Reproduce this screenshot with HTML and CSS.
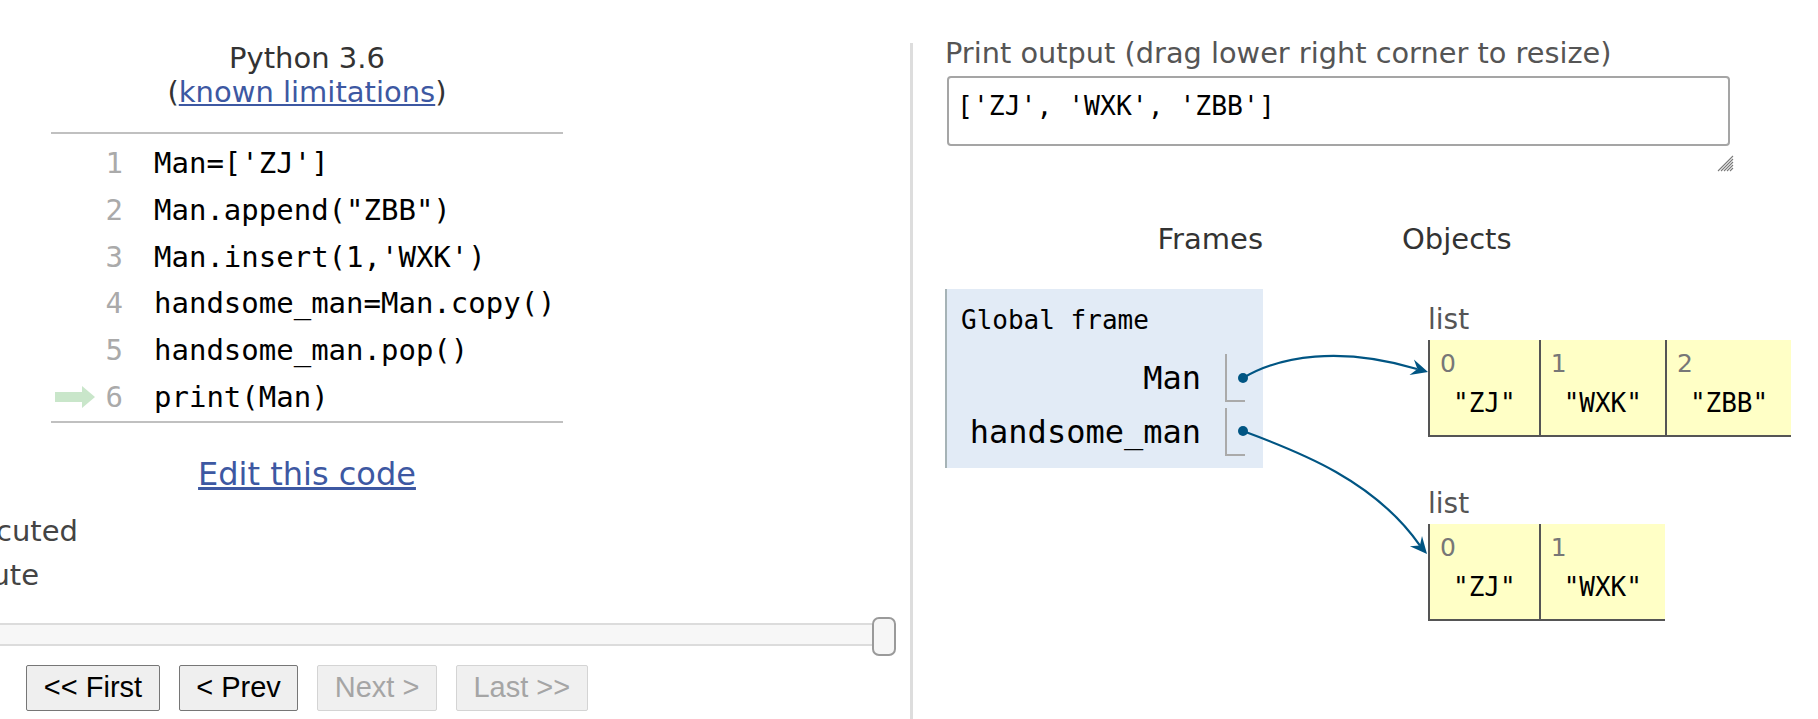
FILE: index.html
```html
<!DOCTYPE html>
<html lang="en">
<head>
<meta charset="utf-8">
<title>Python Tutor</title>
<link rel="stylesheet" href="styles.css">
</head>
<body>
<div class="page">
  <div class="left">
    <div class="center lang">Python 3.6<br>(<a href="#" class="link">known limitations</a>)</div>
    <div class="code">
      <div class="row"><span class="gut"></span><span class="num">1</span><span class="src">Man=['ZJ']</span></div>
      <div class="row"><span class="gut"></span><span class="num">2</span><span class="src">Man.append("ZBB")</span></div>
      <div class="row"><span class="gut"></span><span class="num">3</span><span class="src">Man.insert(1,'WXK')</span></div>
      <div class="row"><span class="gut"></span><span class="num">4</span><span class="src">handsome_man=Man.copy()</span></div>
      <div class="row"><span class="gut"></span><span class="num">5</span><span class="src">handsome_man.pop()</span></div>
      <div class="row"><span class="gut"><svg class="cur" width="42" height="22" viewBox="0 0 42 22"><polygon points="2,6 29,6 29,0 42,11 29,22 29,16 2,16" fill="#c9e6ca"/></svg></span><span class="num">6</span><span class="src">print(Man)</span></div>
    </div>
    <div class="center edit"><a href="#" class="link">Edit this code</a></div>
    <div class="legend">
      <div class="legline l1">line that just executed</div>
      <div class="legline l2">next line to execute</div>
    </div>
    <div class="slider"><div class="track"></div><div class="handle"></div></div>
    <div class="center buttons">
      <button class="btn">&lt;&lt; First</button>
      <button class="btn">&lt; Prev</button>
      <button class="btn" disabled>Next &gt;</button>
      <button class="btn" disabled>Last &gt;&gt;</button>
    </div>
  </div>
  <div class="divider"></div>
  <div class="right">
    <div class="outlabel">Print output (drag lower right corner to resize)</div>
    <div class="stdout">['ZJ', 'WXK', 'ZBB']</div>
    <div class="griprow"><svg width="18" height="18" viewBox="0 0 18 18"><g stroke="#7a7a7a" stroke-width="1.1"><line x1="17" y1="2" x2="2" y2="17"/><line x1="17" y1="5" x2="5" y2="17"/><line x1="17" y1="8" x2="8" y2="17"/><line x1="17" y1="11" x2="11" y2="17"/><line x1="17" y1="14" x2="14" y2="17"/></g></svg></div>
    <div class="diagram">
      <div class="frames">
        <div class="colhead fhead">Frames</div>
        <div class="frame">
          <div class="fname">Global frame</div>
          <div class="var"><span class="vname">Man</span><span class="vval"></span></div>
          <div class="var"><span class="vname">handsome_man</span><span class="vval"></span></div>
        </div>
      </div>
      <div class="objects">
        <div class="colhead">Objects</div>
        <div class="heapobj first">
          <div class="typelabel">list</div>
          <div class="list">
            <div class="cell"><div class="idx">0</div><div class="val">"ZJ"</div></div>
            <div class="cell"><div class="idx">1</div><div class="val">"WXK"</div></div>
            <div class="cell"><div class="idx">2</div><div class="val">"ZBB"</div></div>
          </div>
        </div>
        <div class="heapobj second">
          <div class="typelabel">list</div>
          <div class="list">
            <div class="cell"><div class="idx">0</div><div class="val">"ZJ"</div></div>
            <div class="cell"><div class="idx">1</div><div class="val">"WXK"</div></div>
          </div>
        </div>
      </div>
    </div>
  </div>
</div>
<svg class="arrows" width="1818" height="719" viewBox="0 0 1818 719">
  <g fill="none" stroke="#005583" stroke-width="2.2">
    <path d="M1243,378 C1280,356 1340,346 1417,369"/>
    <path d="M1243,431 C1300,452 1375,481 1420,545.6"/>
  </g>
  <g fill="#005583">
    <circle cx="1243" cy="378" r="5"/>
    <circle cx="1243" cy="431" r="5"/>
    <polygon points="1428,372 1413.9,359.5 1417.4,369 1409.5,374.9"/>
    <polygon points="1427,554 1409.9,546.3 1419.9,545.6 1422,535.9"/>
  </g>
</svg>
</body>
</html>
```

FILE: styles.css
```css
html, body {
  margin: 0;
  padding: 0;
  overflow: hidden;
  background: #fff;
}
body {
  font-family: "DejaVu Sans", Verdana, sans-serif;
  color: #333;
}
.page {
  display: flex;
  align-items: stretch;
  height: 719px;
}
.left {
  width: 910px;
  flex: none;
  padding-top: 41px;
  box-sizing: border-box;
}
.center {
  width: 614px;
  text-align: center;
}
.lang {
  font-size: 29px;
  line-height: 34px;
  color: #333;
}
.link {
  color: #3d58a2;
  text-decoration: underline;
}
.code {
  margin-top: 23px;
  margin-left: 51px;
  width: 512px;
  border-top: 2px solid #c0c0c0;
  border-bottom: 2px solid #c0c0c0;
  padding-top: 6px;
  font-family: "DejaVu Sans Mono", monospace;
  font-size: 29px;
}
.row {
  display: flex;
  align-items: center;
  height: 46.8px;
  line-height: 46.8px;
  white-space: pre;
}
.gut {
  width: 54px;
  height: 46.8px;
  display: flex;
  align-items: center;
  flex: none;
}
.cur {
  display: block;
  margin-left: 2px;
}
.num {
  width: 18px;
  text-align: right;
  color: #aaa;
  flex: none;
}
.src {
  margin-left: 31px;
  color: #000;
}
.edit {
  margin-top: 33px;
  font-size: 32px;
  line-height: 37px;
}
.legend {
  margin-top: 16px;
  font-size: 29px;
  line-height: 44px;
  color: #444;
}
.legline {
  display: flex;
  justify-content: flex-end;
  overflow: hidden;
  white-space: nowrap;
}
.legline.l1 {
  width: 78px;
}
.legline.l2 {
  width: 39px;
}
.slider {
  margin-top: 20px;
  display: flex;
  align-items: flex-start;
  height: 39px;
}
.track {
  width: 872px;
  height: 23px;
  margin-top: 6px;
  box-sizing: border-box;
  border-top: 2px solid #dcdcdc;
  border-bottom: 2px solid #dcdcdc;
  background: #f7f7f7;
}
.handle {
  width: 24px;
  height: 39px;
  box-sizing: border-box;
  border: 2px solid #9a9a9a;
  border-radius: 7px;
  background: #f6f6f6;
}
.buttons {
  margin-top: 9px;
  display: flex;
  justify-content: center;
  gap: 19px;
}
.btn {
  height: 46px;
  padding: 0 16.5px;
  font-family: "Liberation Sans", Arial, sans-serif;
  font-size: 29px;
  color: #000;
  background: #efefef;
  border: 1px solid #767676;
  border-radius: 2px;
  margin: 0;
}
.btn:disabled {
  color: #a5a5a5;
  border-color: #d4d4d4;
  background: #f0f0f0;
}
.divider {
  width: 3px;
  flex: none;
  margin-top: 43px;
  background: #dddddd;
}
.right {
  flex: 1;
  padding-top: 36px;
  padding-left: 32px;
}
.outlabel {
  font-size: 28.8px;
  line-height: 34px;
  color: #555;
  white-space: nowrap;
}
.stdout {
  margin-top: 6px;
  margin-left: 2px;
  width: 783px;
  height: 70px;
  box-sizing: border-box;
  border: 2px solid #a5a5a5;
  border-radius: 4px;
  padding: 13px 8px;
  font-family: "DejaVu Sans Mono", monospace;
  font-size: 26.4px;
  line-height: 30px;
  color: #000;
  white-space: pre;
}
.griprow {
  width: 789px;
  margin-top: 8px;
  height: 18px;
  display: flex;
  justify-content: flex-end;
}
.griprow svg {
  display: block;
}
.diagram {
  margin-top: 50px;
  display: flex;
  gap: 139px;
  align-items: flex-start;
}
.colhead {
  font-size: 29px;
  line-height: 34px;
  color: #333;
}
.frames {
  width: 318px;
  flex: none;
}
.fhead {
  text-align: right;
}
.frame {
  margin-top: 33px;
  background: #e2ebf6;
  border-left: 2px solid #a6b3b6;
  padding: 16px 18px 12px 14px;
}
.fname {
  font-family: "DejaVu Sans Mono", monospace;
  font-size: 26px;
  line-height: 30px;
  color: #000;
  margin-bottom: 19px;
  white-space: pre;
}
.var {
  display: flex;
  height: 48px;
}
.var + .var {
  margin-top: 6px;
}
.vname {
  flex: 1;
  text-align: right;
  padding-right: 24px;
  font-family: "DejaVu Sans Mono", monospace;
  font-size: 32px;
  line-height: 48px;
  color: #000;
}
.vval {
  width: 20px;
  box-sizing: border-box;
  border-left: 2px solid #aaaaaa;
  border-bottom: 2px solid #aaaaaa;
}
.objects {
  flex: none;
}
.heapobj {
  margin-left: 26px;
}
.heapobj.first {
  margin-top: 47px;
}
.heapobj.second {
  margin-top: 50px;
}
.typelabel {
  font-size: 28px;
  line-height: 33px;
  color: #555;
}
.list {
  margin-top: 4px;
  display: flex;
}
.cell {
  background: #ffffc6;
  border-left: 2px solid #555;
  border-bottom: 2px solid #555;
  padding-top: 9px;
  padding-bottom: 17px;
}
.idx {
  padding-left: 10px;
  font-size: 25px;
  line-height: 29px;
  color: #777;
}
.val {
  margin-top: 10px;
  padding: 0 23px;
  text-align: center;
  font-family: "DejaVu Sans Mono", monospace;
  font-size: 26px;
  line-height: 30px;
  color: #000;
  white-space: pre;
}
.arrows {
  position: absolute;
  left: 0;
  top: 0;
  pointer-events: none;
}
```
